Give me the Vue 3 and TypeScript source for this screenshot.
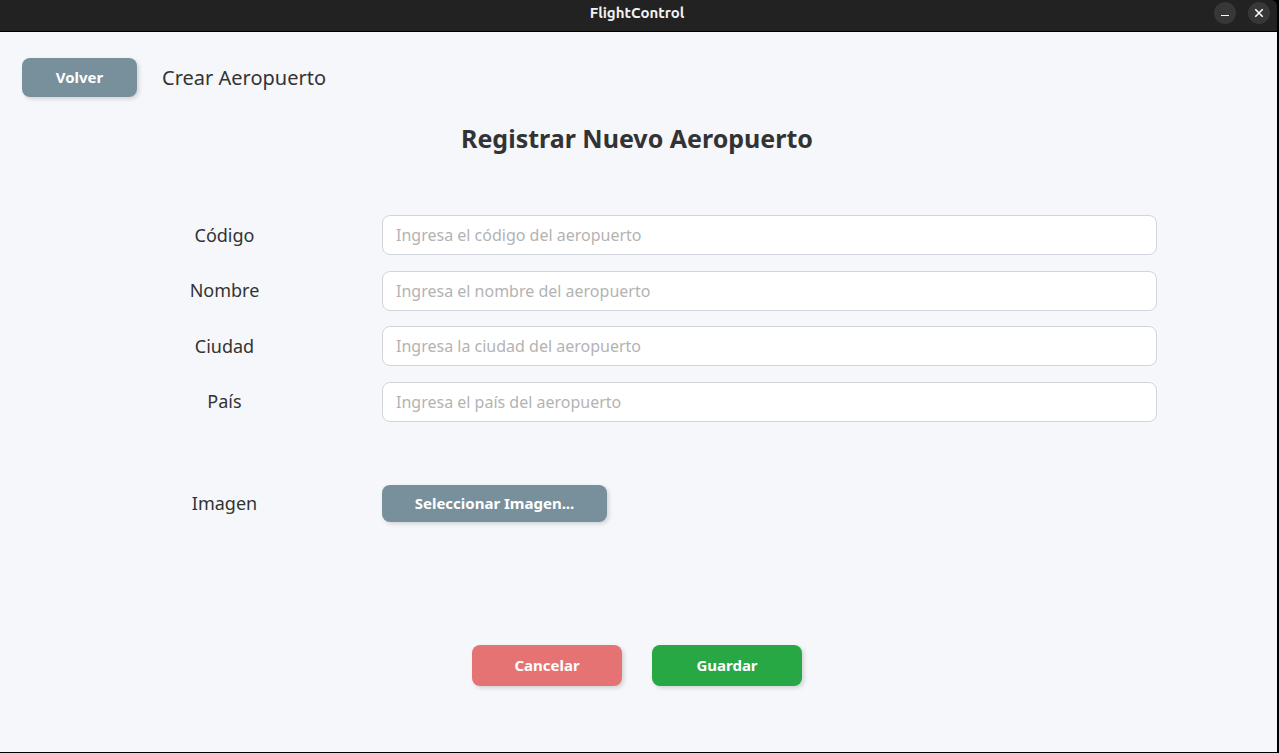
<script setup lang="ts">
import { reactive, ref } from 'vue'

type FieldKey = 'codigo' | 'nombre' | 'ciudad' | 'pais'

interface Field {
  key: FieldKey
  label: string
  placeholder: string
}

const fields: Field[] = [
  { key: 'codigo', label: 'Código', placeholder: 'Ingresa el código del aeropuerto' },
  { key: 'nombre', label: 'Nombre', placeholder: 'Ingresa el nombre del aeropuerto' },
  { key: 'ciudad', label: 'Ciudad', placeholder: 'Ingresa la ciudad del aeropuerto' },
  { key: 'pais', label: 'País', placeholder: 'Ingresa el país del aeropuerto' },
]

const form = reactive<Record<FieldKey, string>>({ codigo: '', nombre: '', ciudad: '', pais: '' })
const picker = ref<HTMLInputElement | null>(null)

function reset(): void {
  for (const field of fields) form[field.key] = ''
}
</script>

<template>
  <div class="window">
    <header class="titlebar">
      <span class="app-name">FlightControl</span>
      <div class="controls">
        <button type="button" class="control" aria-label="Minimizar">
          <svg viewBox="0 0 22 22" width="22" height="22" aria-hidden="true">
            <path d="M7 13.5h8" />
          </svg>
        </button>
        <button type="button" class="control" aria-label="Cerrar">
          <svg viewBox="0 0 22 22" width="22" height="22" aria-hidden="true">
            <path class="cross" d="M7.3 7.3l7.4 7.4M14.7 7.3l-7.4 7.4" />
          </svg>
        </button>
      </div>
    </header>

    <main class="page">
      <nav class="topbar">
        <button type="button" class="btn back">Volver</button>
        <span class="crumb">Crear Aeropuerto</span>
      </nav>

      <h1>Registrar Nuevo Aeropuerto</h1>

      <form id="airport-form" @submit.prevent>
        <div class="fields">
          <div v-for="field in fields" :key="field.key" class="row">
            <label :for="field.key">{{ field.label }}</label>
            <input :id="field.key" v-model="form[field.key]" type="text" :placeholder="field.placeholder" />
          </div>
        </div>

        <div class="row image-row">
          <label for="imagen">Imagen</label>
          <div>
            <button id="imagen" type="button" class="btn pick" @click="picker?.click()">Seleccionar Imagen...</button>
            <input ref="picker" type="file" accept="image/*" hidden />
          </div>
        </div>
      </form>

      <div class="actions">
        <button type="button" class="btn cancel" @click="reset">Cancelar</button>
        <button type="submit" form="airport-form" class="btn save">Guardar</button>
      </div>
    </main>
  </div>
</template>

<style>
body {
  margin: 0;
  background: #000;
}
</style>

<style scoped>
.window {
  box-sizing: border-box;
  min-height: 100vh;
  display: flex;
  flex-direction: column;
  border-right: 2px solid #000;
  border-bottom: 1px solid #000;
  background: #000;
  color: #333;
  font-family: 'Noto Sans', 'Open Sans', sans-serif;
}

.titlebar {
  display: grid;
  grid-template-columns: 1fr auto 1fr;
  height: 31px;
  padding-right: 3px;
  border-bottom: 1px solid #000;
  border-top-right-radius: 6px;
  background: #222;
}

.app-name {
  grid-column: 2;
  color: #f2f2f2;
  font-family: Ubuntu, 'Noto Sans', sans-serif;
  font-size: 15px;
  font-weight: 600;
  line-height: 26px;
}

.controls {
  display: flex;
  justify-content: flex-end;
  gap: 12px;
  padding: 2px 4px 0 0;
}

.control {
  width: 22px;
  height: 22px;
  padding: 0;
  border: 0;
  border-radius: 50%;
  background: #373737;
}

.control svg {
  display: block;
  fill: none;
  stroke: #fff;
  stroke-width: 1;
}

.control .cross {
  stroke-width: 1.6;
}

.page {
  flex: 1;
  padding: 26px 3px 24px 0;
  background: #f5f7fb;
}

.topbar {
  display: flex;
  align-items: center;
  gap: 25px;
  padding-left: 22px;
}

.crumb {
  font-size: 20px;
  line-height: 28px;
}

h1 {
  margin: 23px 0 0;
  font-size: 25px;
  font-weight: 700;
  line-height: 36px;
  text-align: center;
}

form {
  padding: 0 117px 0 120px;
}

.fields {
  display: flex;
  flex-direction: column;
  justify-content: space-between;
  min-height: 207px;
  margin-top: 59px;
}

.row {
  display: grid;
  grid-template-columns: 209px 1fr;
  column-gap: 53px;
  align-items: center;
}

label {
  padding-bottom: 1px;
  font-size: 18px;
  line-height: 24px;
  text-align: center;
}

input[type='text'] {
  box-sizing: border-box;
  width: 100%;
  height: 40px;
  padding: 0 13px;
  border: 1px solid #d0d4dc;
  border-radius: 8px;
  background: #fff;
  color: #333;
  font: inherit;
  font-size: 16px;
}

input::placeholder {
  color: #b3b3b3;
  opacity: 1;
}

.btn {
  display: block;
  padding: 0 0 2px;
  border: 0;
  border-radius: 8px;
  background: #78909c;
  box-shadow: 2px 2px 4px rgba(0, 0, 0, 0.15);
  color: #fff;
  font: inherit;
  font-size: 15px;
  font-weight: 700;
  cursor: pointer;
}

.back {
  width: 115px;
  height: 39px;
}

.image-row {
  margin-top: 63px;
}

.pick {
  width: 225px;
  height: 37px;
}

.actions {
  display: flex;
  justify-content: center;
  gap: 30px;
  margin-top: 123px;
}

.cancel,
.save {
  width: 150px;
  height: 41px;
}

.cancel {
  background: #e57373;
}

.save {
  background: #28a745;
}
</style>
